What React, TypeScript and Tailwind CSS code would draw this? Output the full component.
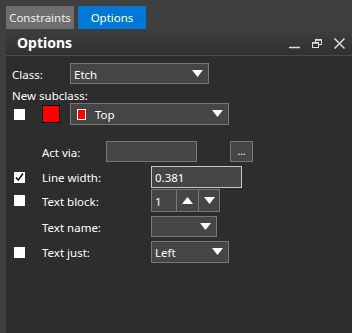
import React from "react";

const font = { fontFamily: '"Noto Sans", sans-serif' };

function Arrow() {
  return (
    <svg width="11" height="8" viewBox="0 0 11 8">
      <path d="M0 0 H11 L5.5 7 Z" fill="#fff" />
    </svg>
  );
}

function Check({ checked = false }: { checked?: boolean }) {
  return (
    <div className="w-[11px] h-[11px] bg-white flex items-center justify-center shrink-0">
      {checked && (
        <svg width="9" height="8" viewBox="0 0 9 8">
          <path d="M1 4.5 L3.3 7 L8 0.5" stroke="#000" strokeWidth="1.4" fill="none" />
        </svg>
      )}
    </div>
  );
}

function Dropdown({ w, h, text }: { w: string; h: string; text?: string }) {
  return (
    <div className={`${w} ${h} bg-[#454545] border border-[#777] flex items-center pl-[3px] pr-[5px]`}>
      <span className="flex-1 text-white pt-[2px]">{text}</span>
      <Arrow />
    </div>
  );
}

export default function App() {
  return (
    <div
      className="w-[352px] h-[333px] bg-[#3f3f3f] flex flex-col text-[11.5px] text-white leading-none"
      style={font}
    >
      {/* Tabs */}
      <div className="flex gap-[4px] pl-[6px] pt-[6px] h-[29px] shrink-0">
        <div className="w-[68px] h-[23px] bg-[#6e6e6e] flex items-center justify-center text-[#f0f0f0]">
          Constraints
        </div>
        <div className="w-[68px] h-[23px] bg-[#0078d7] flex items-center justify-center text-white">
          Options
        </div>
      </div>

      {/* Panel */}
      <div className="ml-[6px] flex-1 bg-[#2d2d2d] flex flex-col">
        <div className="h-[27px] bg-gradient-to-b from-[#3e3e3e] to-[#303030] border-b border-[#4a4a4a] flex items-center pl-[11px] pr-[7px]">
          <span className="font-bold text-[14px] flex-1 pt-[2px]">Options</span>
          <div className="flex items-center gap-[12px] pt-[2px]">
            <svg width="11" height="11" viewBox="0 0 11 11">
              <path d="M0 9.5 H11" stroke="#ddd" strokeWidth="1.5" />
            </svg>
            <svg width="10" height="9" viewBox="0 0 10 9">
              <rect x="3.5" y="0.5" width="6" height="5" fill="none" stroke="#ddd" />
              <rect x="0.5" y="3.5" width="6" height="5" fill="#303030" stroke="#ddd" />
              <path d="M0.5 4 H6.5 M3.5 1 H9.5" stroke="#ddd" strokeWidth="1.5" />
            </svg>
            <svg width="11" height="11" viewBox="0 0 11 11">
              <path d="M0.5 0.5 L10.5 10.5 M10.5 0.5 L0.5 10.5" stroke="#ddd" strokeWidth="1.5" />
            </svg>
          </div>
        </div>

        {/* Class */}
        <div className="flex items-center h-[21px] mt-[7px] pl-[6px]">
          <span className="w-[58px] pt-[2px]">Class:</span>
          <Dropdown w="w-[139px]" h="h-[21px]" text="Etch" />
        </div>

        {/* New subclass */}
        <div className="flex items-center h-[17px] mt-[2px] pl-[6px] pt-[3px]">New subclass:</div>

        <div className="flex items-center h-[22px] pl-[8px]">
          <Check />
          <div className="ml-[17px] w-[18px] h-[18px] bg-[#ff0000] border border-black" />
          <div className="ml-[10px]">
            <div className="w-[159px] h-[22px] bg-[#454545] border border-[#777] flex items-center pl-[6px] pr-[5px]">
              <div className="w-[9px] h-[11px] bg-[#ff0000] border border-white" />
              <span className="flex-1 ml-[9px] pt-[2px]">Top</span>
              <Arrow />
            </div>
          </div>
        </div>

        {/* Act via */}
        <div className="flex items-center h-[21px] mt-[16px] pl-[36px]">
          <span className="w-[64px] pt-[2px]">Act via:</span>
          <div className="w-[91px] h-[21px] bg-[#454545] border border-[#777]" />
          <div className="ml-[33px] w-[23px] h-[21px] bg-[#454545] border border-[#777] flex items-end justify-center pb-[5px] text-[10px]">
            ...
          </div>
        </div>

        {/* Line width */}
        <div className="flex items-center h-[22px] mt-[4px] pl-[8px]">
          <Check checked />
          <span className="ml-[17px] w-[109px] pt-[2px]">Line width:</span>
          <div className="w-[91px] h-[22px] bg-[#454545] border border-[#c8c8c8] flex items-center pl-[3px] pt-[2px]">
            0.381
          </div>
        </div>

        {/* Text block */}
        <div className="flex items-center h-[23px] mt-[1px] pl-[8px]">
          <Check />
          <span className="ml-[17px] w-[109px] pt-[2px]">Text block:</span>
          <div className="w-[69px] h-[23px] bg-[#454545] border border-[#777] flex">
            <div className="w-[25px] flex items-center pl-[3px] pt-[2px] border-r border-[#777]">1</div>
            <div className="w-[22px] flex items-center justify-center border-r border-[#777]">
              <svg width="11" height="8" viewBox="0 0 11 8">
                <path d="M0 7 H11 L5.5 0 Z" fill="#fff" />
              </svg>
            </div>
            <div className="flex-1 flex items-center justify-center">
              <Arrow />
            </div>
          </div>
        </div>

        {/* Text name */}
        <div className="flex items-center h-[21px] mt-[4px] pl-[36px]">
          <span className="w-[109px] pt-[2px]">Text name:</span>
          <Dropdown w="w-[66px]" h="h-[21px]" />
        </div>

        {/* Text just */}
        <div className="flex items-center h-[22px] mt-[4px] pl-[8px]">
          <Check />
          <span className="ml-[17px] w-[109px] pt-[2px]">Text just:</span>
          <Dropdown w="w-[78px]" h="h-[22px]" text="Left" />
        </div>
      </div>
    </div>
  );
}
